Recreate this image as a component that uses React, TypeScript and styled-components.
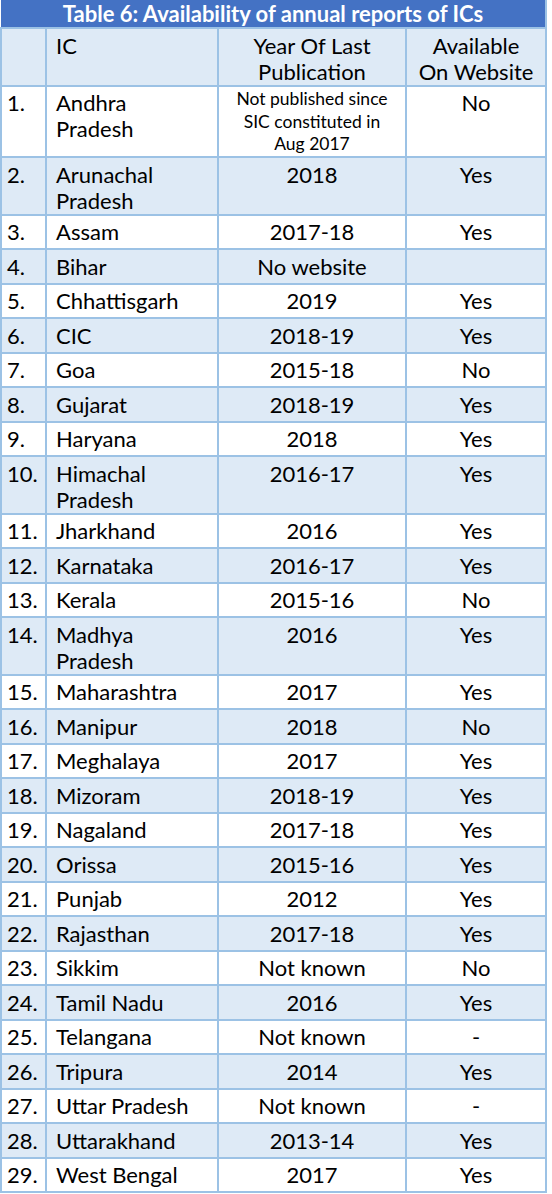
import styled, { createGlobalStyle } from 'styled-components';

const GlobalStyle = createGlobalStyle`
    body {
        margin: 0;
        background: #ffffff;
        font-family: "Lato", "Noto Sans", sans-serif;
    }
`;

// Fila de la tabla: nombre, año y disponibilidad
interface Fila {
    num: number;
    nombre: string[];
    anio: string[];
    disponible: string;
    chico?: boolean;
}

const filas: Fila[] = [
    { num: 1, nombre: ['Andhra', 'Pradesh'], anio: ['Not published since', 'SIC constituted in', 'Aug 2017'], disponible: 'No', chico: true },
    { num: 2, nombre: ['Arunachal', 'Pradesh'], anio: ['2018'], disponible: 'Yes' },
    { num: 3, nombre: ['Assam'], anio: ['2017-18'], disponible: 'Yes' },
    { num: 4, nombre: ['Bihar'], anio: ['No website'], disponible: '' },
    { num: 5, nombre: ['Chhattisgarh'], anio: ['2019'], disponible: 'Yes' },
    { num: 6, nombre: ['CIC'], anio: ['2018-19'], disponible: 'Yes' },
    { num: 7, nombre: ['Goa'], anio: ['2015-18'], disponible: 'No' },
    { num: 8, nombre: ['Gujarat'], anio: ['2018-19'], disponible: 'Yes' },
    { num: 9, nombre: ['Haryana'], anio: ['2018'], disponible: 'Yes' },
    { num: 10, nombre: ['Himachal', 'Pradesh'], anio: ['2016-17'], disponible: 'Yes' },
    { num: 11, nombre: ['Jharkhand'], anio: ['2016'], disponible: 'Yes' },
    { num: 12, nombre: ['Karnataka'], anio: ['2016-17'], disponible: 'Yes' },
    { num: 13, nombre: ['Kerala'], anio: ['2015-16'], disponible: 'No' },
    { num: 14, nombre: ['Madhya', 'Pradesh'], anio: ['2016'], disponible: 'Yes' },
    { num: 15, nombre: ['Maharashtra'], anio: ['2017'], disponible: 'Yes' },
    { num: 16, nombre: ['Manipur'], anio: ['2018'], disponible: 'No' },
    { num: 17, nombre: ['Meghalaya'], anio: ['2017'], disponible: 'Yes' },
    { num: 18, nombre: ['Mizoram'], anio: ['2018-19'], disponible: 'Yes' },
    { num: 19, nombre: ['Nagaland'], anio: ['2017-18'], disponible: 'Yes' },
    { num: 20, nombre: ['Orissa'], anio: ['2015-16'], disponible: 'Yes' },
    { num: 21, nombre: ['Punjab'], anio: ['2012'], disponible: 'Yes' },
    { num: 22, nombre: ['Rajasthan'], anio: ['2017-18'], disponible: 'Yes' },
    { num: 23, nombre: ['Sikkim'], anio: ['Not known'], disponible: 'No' },
    { num: 24, nombre: ['Tamil Nadu'], anio: ['2016'], disponible: 'Yes' },
    { num: 25, nombre: ['Telangana'], anio: ['Not known'], disponible: '-' },
    { num: 26, nombre: ['Tripura'], anio: ['2014'], disponible: 'Yes' },
    { num: 27, nombre: ['Uttar Pradesh'], anio: ['Not known'], disponible: '-' },
    { num: 28, nombre: ['Uttarakhand'], anio: ['2013-14'], disponible: 'Yes' },
    { num: 29, nombre: ['West Bengal'], anio: ['2017'], disponible: 'Yes' },
];

const Tabla = styled.table`
    width: 545px;
    border-collapse: collapse;
    table-layout: fixed;
    color: #000;
`;

const Titulo = styled.th`
    height: 27px;
    padding: 0;
    background: #4472c4;
    color: #ffffff;
    font-size: 22px;
    font-weight: 700;
    line-height: 27px;
    border: 2px solid #9cc2e5;
    border-top: none;
    border-left: none;
`;

// Word deja una altura mínima por fila
const Fila = styled.tr<{ $azul: boolean }>`
    height: 34.5px;
    background: ${(p) => (p.$azul ? '#deeaf6' : '#ffffff')};
`;

const Celda = styled.td<{ $centro?: boolean; $chico?: boolean }>`
    border: 2px solid #9cc2e5;
    padding: ${(p) => (p.$chico ? '1.5px 2px 0' : '3.5px 2px 0 9px')};
    vertical-align: top;
    white-space: nowrap;
    font-weight: 400;
    text-align: ${(p) => (p.$centro ? 'center' : 'left')};
    font-size: ${(p) => (p.$chico ? '17.5px' : '22px')};
    line-height: ${(p) => (p.$chico ? '22.7px' : '26px')};
    ${(p) => p.$centro && 'padding-left: 2px;'}
`;

const Numero = styled(Celda)`
    padding-left: 5px;
    padding-right: 0;
`;

const Lineas = ({ textos }: { textos: string[] }) => (
    <>
        {textos.map((t, i) => (
            <span key={i}>
                {i > 0 && <br />}
                {t}
            </span>
        ))}
    </>
);

export default function App() {
    return (
        <>
            <GlobalStyle />
            <Tabla>
                <colgroup>
                    <col style={{ width: 45 }} />
                    <col style={{ width: 172 }} />
                    <col style={{ width: 188 }} />
                    <col style={{ width: 140 }} />
                </colgroup>
                <thead>
                    <tr>
                        <Titulo colSpan={4}>Table 6: Availability of annual reports of ICs</Titulo>
                    </tr>
                    <Fila $azul>
                        <Numero as="th"></Numero>
                        <Celda as="th">IC</Celda>
                        <Celda as="th" $centro>Year Of Last<br />Publication</Celda>
                        <Celda as="th" $centro>Available<br />On Website</Celda>
                    </Fila>
                </thead>
                <tbody>
                    {filas.map((f) => (
                        <Fila key={f.num} $azul={f.num % 2 === 0}>
                            <Numero>{f.num}.</Numero>
                            <Celda><Lineas textos={f.nombre} /></Celda>
                            <Celda $centro $chico={f.chico}><Lineas textos={f.anio} /></Celda>
                            <Celda $centro>{f.disponible}</Celda>
                        </Fila>
                    ))}
                </tbody>
            </Tabla>
        </>
    );
}
